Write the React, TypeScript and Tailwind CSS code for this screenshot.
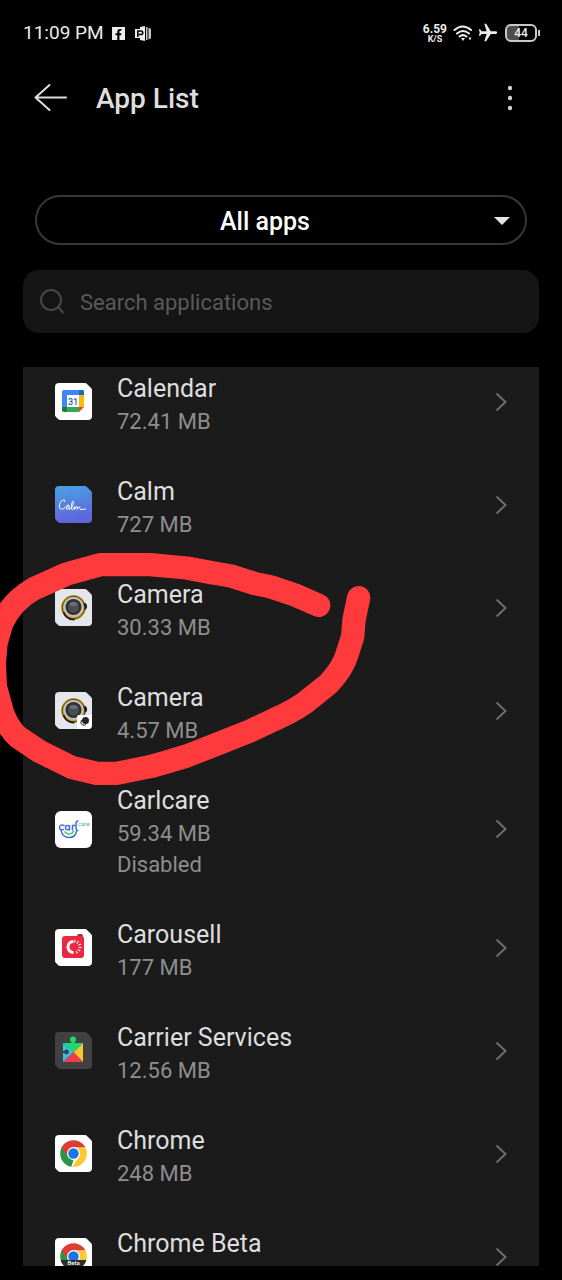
import { useId, useState, type ReactNode } from 'react';
import { FaFacebookF } from 'react-icons/fa';
import { MdFlight } from 'react-icons/md';

type AppItem = {
  id: string;
  name: string;
  size: string;
  disabled?: boolean;
  icon: ReactNode;
};

const apps: AppItem[] = [
  { id: 'calendar', name: 'Calendar', size: '72.41 MB', icon: <CalendarIcon /> },
  { id: 'calm', name: 'Calm', size: '727 MB', icon: <CalmIcon /> },
  { id: 'camera', name: 'Camera', size: '30.33 MB', icon: <CameraIcon /> },
  { id: 'camera-clone', name: 'Camera', size: '4.57 MB', icon: <CameraIcon badge /> },
  { id: 'carlcare', name: 'Carlcare', size: '59.34 MB', disabled: true, icon: <CarlcareIcon /> },
  { id: 'carousell', name: 'Carousell', size: '177 MB', icon: <CarousellIcon /> },
  { id: 'carrier', name: 'Carrier Services', size: '12.56 MB', icon: <CarrierIcon /> },
  { id: 'chrome', name: 'Chrome', size: '248 MB', icon: <ChromeIcon /> },
  { id: 'chrome-beta', name: 'Chrome Beta', size: '281 MB', icon: <ChromeIcon beta /> },
];

export default function App() {
  const [query, setQuery] = useState('');
  const visible = apps.filter((a) => a.name.toLowerCase().includes(query.toLowerCase()));

  return (
    <div className="relative flex h-screen flex-col overflow-hidden bg-black font-['Roboto',sans-serif] text-[#dedede]">
      <StatusBar />

      <header className="flex h-16 items-center pl-8 pr-9">
        <button type="button" aria-label="Back" className="shrink-0">
          <svg width="36" height="30" viewBox="0 0 36 30" fill="none" stroke="currentColor" strokeWidth="2" strokeLinecap="round" strokeLinejoin="round">
            <path d="M17.500 2 3.500 14.500 17.500 27M3.500 14.500H34" />
          </svg>
        </button>
        <h1 className="ml-7 flex-1 pt-0.5 text-[28px] font-medium leading-8">App List</h1>
        <button type="button" aria-label="More options" className="flex h-8 w-8 items-center justify-center">
          <svg width="6" height="28" viewBox="0 0 6 28" fill="#cfcfcf">
            <circle cx="3" cy="4" r="2.200" />
            <circle cx="3" cy="14" r="2.200" />
            <circle cx="3" cy="24" r="2.200" />
          </svg>
        </button>
      </header>

      <div className="relative mx-[35px] mt-[65px]">
        <select
          aria-label="Filter apps"
          className="h-[50px] w-full appearance-none rounded-full border-2 border-[#363636] bg-black pr-8 pt-1 text-center [text-align-last:center] text-[25px] font-medium text-white"
        >
          <option>All apps</option>
        </select>
        <svg className="pointer-events-none absolute right-4 top-[21px]" width="18" height="10" viewBox="0 0 18 10" fill="#e4e4e4">
          <path d="M1 1H17L9 9Z" />
        </svg>
      </div>

      <label className="mx-[23px] mt-[25px] flex h-[63px] items-center gap-[15px] rounded-2xl bg-[#151515] px-4">
        <svg className="shrink-0" width="26" height="26" viewBox="0 0 26 26" fill="none" stroke="#474747" strokeWidth="2" strokeLinecap="round">
          <circle cx="12" cy="11" r="10" />
          <path d="m19.500 18.500 4.500 5" />
        </svg>
        <input
          type="text"
          aria-label="Search applications"
          value={query}
          onChange={(e) => setQuery(e.target.value)}
          placeholder="Search applications"
          className="h-9 min-w-0 flex-1 bg-transparent pt-0.5 text-[22px] text-[#dedede] outline-none placeholder:text-[#5a5a5a]"
        />
      </label>

      <main className="mx-[23px] mb-3.5 mt-[34px] min-h-0 flex-1 overflow-hidden bg-[#1b1b1b]">
        <ul className="-mt-4">
          {visible.map((app) => (
            <AppRow key={app.id} app={app} />
          ))}
        </ul>
      </main>

      <Scribble />
    </div>
  );
}

function StatusBar() {
  return (
    <div className="flex h-[66px] items-center pl-[23px] pr-[22px] text-[#ececec]">
      <span className="text-[19px] leading-6">11:09 PM</span>
      <span className="ml-2 flex h-[13px] w-[13px] items-end justify-center bg-[#ececec] text-black">
        <FaFacebookF size={11} />
      </span>
      <svg className="ml-2.5" width="17" height="15" viewBox="0 0 17 15">
        <path d="M10 0v15l-5-1v-2H0V3h5V1Z" fill="#ececec" />
        <path d="M11 1h1.500v13H11ZM13.500 1.500q2.500 1 2.500 2v8q0 1.500-2.500 2Z" fill="#c8c8c8" />
        <path d="M2.800 11V5h3q2 0 2 1.800t-2 1.800h-3" fill="none" stroke="#000" strokeWidth="1.500" />
      </svg>
      <div className="ml-auto flex items-center">
        <span className="flex flex-col items-center font-bold">
          <span className="text-[12px] leading-3">6.59</span>
          <span className="text-[9px] leading-2">K/S</span>
        </span>
        <svg className="ml-1.5" width="20" height="18" viewBox="0 0 20 18" fill="none" stroke="currentColor" strokeWidth="2" strokeLinecap="round">
          <path d="M1.500 6q8-7 16.500 0M4 9.500q6-5 12 0M6.500 12.500q3.500-2.800 7 0" />
          <path d="M8 14h4l-2 3Z" fill="currentColor" stroke="none" />
          <path d="M15.500 13.500h3l-1.500 3Z" fill="currentColor" stroke="none" />
        </svg>
        <MdFlight className="ml-1 rotate-90" size={22} />
        <span className="ml-1.5 flex items-center">
          <span className="flex h-[18px] w-8 items-center justify-center rounded-md border-2 border-[#c9c9c9] bg-linear-to-r from-[#4d4d4d] from-44% to-black to-44% text-[12px] font-medium leading-3">
            44
          </span>
          <span className="ml-px h-1.5 w-0.5 bg-[#c9c9c9]" />
        </span>
      </div>
    </div>
  );
}

function AppRow({ app }: { app: AppItem }) {
  return (
    <li>
      <button type="button" className="flex w-full items-center px-8 pb-[17px] pt-[15px] text-left">
        <span className="w-[37px] shrink-0">{app.icon}</span>
        <span className="ml-[25px] flex-1 pt-1.5">
          <span className="block text-[25px] leading-[34px]">{app.name}</span>
          <span className="block text-[22px] leading-[31px] text-[#8e8e8e]">{app.size}</span>
          {app.disabled && <span className="block text-[22px] leading-[31px] text-[#8e8e8e]">Disabled</span>}
        </span>
        <svg width="12" height="20" viewBox="0 0 12 20" fill="none" stroke="#6d6d6d" strokeWidth="2">
          <path d="m1.500 1.500 9 8.500-9 8.500" />
        </svg>
      </button>
    </li>
  );
}

// Rounded tile with the clipped top right corner that the launcher theme uses
function Tile({ fill, children }: { fill: string; children: ReactNode }) {
  return (
    <svg width="37" height="37" viewBox="0 0 37 37" aria-hidden="true">
      <path d="M4 0H30Q31 0 32 1L36 5Q37 6 37 7V33Q37 37 33 37H5Q4 37 3 36L1 34Q0 33 0 32V4Q0 0 4 0Z" fill={fill} />
      {children}
    </svg>
  );
}

function CalendarIcon() {
  return (
    <Tile fill="#fff">
      <path d="M7 9q0-2 2-2h18q2 0 2 2v3H12v12H7Z" fill="#4285f4" />
      <path d="M24 7h3q2 0 2 2v3h-5Z" fill="#1967d2" />
      <path d="M24 12h5v12h-5Z" fill="#fbbc04" />
      <path d="M12 24h12v5H12Z" fill="#34a853" />
      <path d="M7 24h5v5H9q-2 0-2-2Z" fill="#188038" />
      <path d="M24 24h5l-5 5Z" fill="#ea4335" />
      <text x="18" y="21.500" textAnchor="middle" fontSize="9" fontWeight="500" fill="#1f5fbf">31</text>
    </Tile>
  );
}

function CalmIcon() {
  const id = useId();
  return (
    <Tile fill={`url(#${id})`}>
      <defs>
        <linearGradient id={id} x1="0" y1="0" x2="0.200" y2="1">
          <stop offset="0" stopColor="#4aa3e2" />
          <stop offset="1" stopColor="#6065dc" />
        </linearGradient>
      </defs>
      <path
        d="M9.500 15.500q.8-2-1-1.600C6 14.500 4 18 4.500 21c.5 3.500 4 2.500 6.500-.5 1-1.500 3.500-2 3-.5-2-1-3.500 3-2 3.500 1 .3 2-2 2.200-3-.5 2-.2 3 .8 2.800 2-.5 4-6.500 3.200-8-1.600-.5-2.700 8-1 8.200 1.300 0 2-2.500 2.800-3-.2 1-.5 2-.5 3 1-2 2-3 2.700-2.700.5.500-.2 1.800-.2 2.500 1-2 2.200-2.700 2.700-2.300.6.600-.4 2.300.8 2.500q1.500.2 5-.5"
        fill="none"
        stroke="#fff"
        strokeWidth="1"
        strokeLinecap="round"
      />
    </Tile>
  );
}

function CameraIcon({ badge }: { badge?: boolean }) {
  return (
    <Tile fill="#e4e6ee">
      <circle cx="18.500" cy="18.500" r="12.500" fill="#d6a52c" />
      <circle cx="18.500" cy="18.500" r="11.300" fill="none" stroke="#4a3c1c" strokeWidth="1" />
      <path d="M8.500 23q3 8 11 7.500" fill="none" stroke="#222" strokeWidth="2" />
      <path d="M28.500 14h2l1.500 2v3l-2 2Z" fill="#28221c" />
      <circle cx="18.500" cy="18" r="10" fill="#bfc1c4" />
      <circle cx="18.500" cy="18" r="8" fill="#2f3133" />
      <circle cx="18.500" cy="18" r="5.500" fill="#4b4f52" />
      <ellipse cx="18.500" cy="15" rx="4" ry="2" fill="#6a6f72" />
      {badge && (
        <>
          <path d="M24 23h13v10q0 4-4 4H22V25q0-2 2-2Z" fill="#fff" />
          <circle cx="30.500" cy="28.500" r="3.500" fill="#20222c" />
          <path d="M26.500 28q-2 3.500 1 5 2.500.7 3.500-.5" fill="none" stroke="#20222c" strokeWidth="1" />
        </>
      )}
    </Tile>
  );
}

function CarlcareIcon() {
  return (
    <svg width="37" height="37" viewBox="0 0 37 37" aria-hidden="true">
      <rect width="37" height="37" rx="6" fill="#fff" />
      <g fill="none" stroke="#3c74d6" strokeWidth="1.500" strokeLinecap="round">
        <path d="M9 14.500q-4-1.500-4.500 1.500-.2 3.500 4 2.500" />
        <path d="M14.500 19v-4q-4-1.500-4 1.800 0 3 4 1.200V19M17.500 19v-4.500h2.500" />
        <path d="M23 10q-2 0-2 3v4q0 2.500 1.800 2.500" />
        <path d="M6 19q1 7.500 8.500 7.500 5.500 0 7-6" />
      </g>
      <path d="M9.500 20.500q5 5.500 9.500-.5" fill="none" stroke="#50b96f" strokeWidth="1.500" />
      <text x="23" y="15" fontSize="6" fill="#50b96f">care</text>
    </svg>
  );
}

function CarousellIcon() {
  return (
    <Tile fill="#fff">
      <path d="M22 8q0-3 2-3h2q2 0 2 3Z" fill="#b91f35" />
      <rect x="7" y="7" width="22" height="22" rx="3" fill="#ec2840" />
      <path d="M18.500 12.500a5.500 5.500 0 1 0 0 11" fill="none" stroke="#fff" strokeWidth="3" />
      <path d="M19.500 12.500a5.500 5.500 0 0 1 0 11" fill="none" stroke="#fff" strokeWidth="3" strokeDasharray="1 1.800" />
    </Tile>
  );
}

function CarrierIcon() {
  return (
    <Tile fill="#414141">
      <path d="M8 11 18.500 20 8 30Z" fill="#2fc5f0" />
      <path d="M8 11h20l-9.500 9.500Z" fill="#20d873" />
      <circle cx="18" cy="7.500" r="3" fill="#20d873" />
      <path d="M16.500 8h3v4h-3Z" fill="#20d873" />
      <path d="M28 11v19l-9.500-9.500Z" fill="#fbc52b" />
      <path d="M8 30 18.500 20 28 30Z" fill="#ef3c51" />
      <circle cx="11.500" cy="20" r="2.400" fill="#414141" />
      <path d="M7.500 19h3v2h-3Z" fill="#414141" />
    </Tile>
  );
}

function ChromeIcon({ beta }: { beta?: boolean }) {
  const id = useId();
  return (
    <Tile fill="#fff">
      <clipPath id={id}>
        <circle cx="18.500" cy="18.500" r="13.300" />
      </clipPath>
      <g clipPath={`url(#${id})`}>
        <path d="M5 5h27v7.500H18.500L12 22 5 12Z" fill="#e03c31" />
        <path d="M5 9.500 13 21.700 18.500 25 16 33H5Z" fill="#2a9447" />
        <path d="M18.500 12.500H33V33H16.500L24 21.700Z" fill="#fcc934" />
        <circle cx="18.500" cy="18.500" r="6.500" fill="#fff" />
        <circle cx="18.500" cy="18.500" r="5.200" fill="#1a73e8" />
        {beta && <path d="M4 22h29v11H4Z" fill="#2e2e2e" />}
      </g>
      {beta && (
        <text x="18.500" y="27" textAnchor="middle" fontSize="6" fontWeight="500" fill="#fff">Beta</text>
      )}
    </Tile>
  );
}

// Hand-drawn marker loop around the two Camera entries
function Scribble() {
  return (
    <svg
      className="pointer-events-none absolute left-0 top-[540px]"
      width="400"
      height="260"
      viewBox="0 0 1200 780"
      fill="none"
      stroke="#ff3a3d"
      strokeWidth="70"
      strokeLinecap="round"
      strokeLinejoin="round"
      aria-hidden="true"
    >
      <path d="M956 196 885 165 810 140 765 131 690 107 640 99 560 84 450 74H300L200 102 100 147Q35 185 5 250L-12 310-17 370-14 440 8 520Q25 565 55 592L120 635 215 682 290 700H350L450 680 500 666 560 648 670 605 750 573 820 540Q900 505 935 472L985 432Q1030 385 1042 340L1058 290 1062 240 1076 173" />
    </svg>
  );
}
